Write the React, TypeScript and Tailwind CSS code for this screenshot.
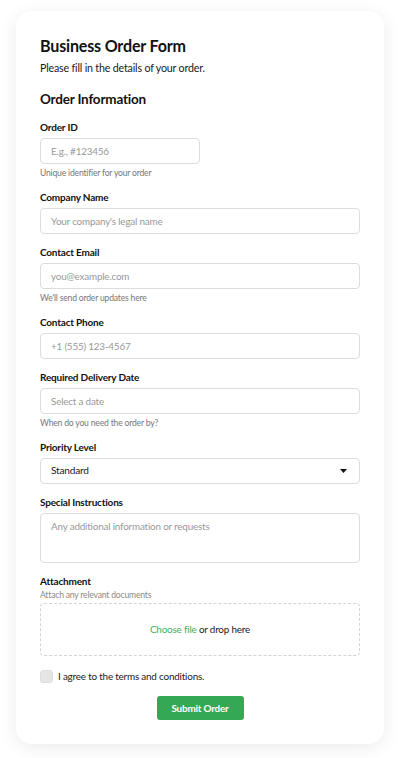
import React from "react";

function Label({ children, className = "" }: { children: React.ReactNode; className?: string }) {
  return <div className={`text-[10px] leading-[18px] font-bold text-[#111] mb-[2px] ${className}`}>{children}</div>;
}

function Helper({ children, className = "" }: { children: React.ReactNode; className?: string }) {
  return <div className={`text-[8.6px] leading-[12px] text-[#777] mt-[3px] ${className}`}>{children}</div>;
}

function Input({ placeholder, className = "" }: { placeholder: string; className?: string }) {
  return (
    <div className={`h-[26px] border border-[#dcdcdc] rounded-[4px] px-[10px] flex items-center text-[9.9px] text-[#999] ${className}`}>
      {placeholder}
    </div>
  );
}

export default function App() {
  return (
    <div className="bg-white min-h-[758px] pt-[11px] px-4 pb-3 tracking-[-0.012em]" style={{ fontFamily: '"Lato", "Noto Sans", sans-serif' }}>
      <div className="bg-white rounded-[16px] shadow-[0_4px_18px_rgba(0,0,0,0.08)] px-6 pt-6 pb-6 text-[#111]">
        <h1 className="text-[16.1px] leading-[22px] font-bold">Business Order Form</h1>
        <p className="text-[10.7px] leading-[20px] mt-px text-[#1a1a1a]">Please fill in the details of your order.</p>
        <h2 className="text-[13.5px] leading-[22px] font-bold mt-[10px] mb-[8px]">Order Information</h2>

        <div className="mb-[9px]">
          <Label>Order ID</Label>
          <Input placeholder="E.g., #123456" className="w-[160px]" />
          <Helper>Unique identifier for your order</Helper>
        </div>

        <div className="mb-[9px]">
          <Label>Company Name</Label>
          <Input placeholder="Your company's legal name" />
        </div>

        <div className="mb-[9px]">
          <Label>Contact Email</Label>
          <Input placeholder="you@example.com" />
          <Helper>We'll send order updates here</Helper>
        </div>

        <div className="mb-[9px]">
          <Label>Contact Phone</Label>
          <Input placeholder="+1 (555) 123-4567" />
        </div>

        <div className="mb-[9px]">
          <Label>Required Delivery Date</Label>
          <Input placeholder="Select a date" />
          <Helper>When do you need the order by?</Helper>
        </div>

        <div className="mb-[9px]">
          <Label>Priority Level</Label>
          <div className="h-[26px] border border-[#dcdcdc] rounded-[4px] px-[10px] flex items-center justify-between text-[10.1px] text-[#1a1a1a]">
            <span>Standard</span>
            <svg width="7" height="4" viewBox="0 0 7 4" className="mr-[2px]">
              <path d="M0 0h7L3.5 4z" fill="#111" />
            </svg>
          </div>
        </div>

        <div className="mb-[9px]">
          <Label>Special Instructions</Label>
          <div className="h-[50px] border border-[#dcdcdc] rounded-[4px] px-[10px] pt-[4px] text-[9.9px] leading-[16px] text-[#999]">
            Any additional information or requests
          </div>
        </div>

        <div>
          <Label className="mb-0">Attachment</Label>
          <div className="text-[8.6px] leading-[10px] text-[#8a8a8a] -mt-[2px]">Attach any relevant documents</div>
          <div className="mt-[3px] h-[53px] border border-dashed border-[#d4d4d4] rounded-[4px] flex items-center justify-center text-[9.9px]">
            <span className="text-[#3fae5a]">Choose file</span>
            <span className="text-[#1a1a1a]">&nbsp;or drop here</span>
          </div>
        </div>

        <div className="mt-[10px] h-[20px] flex items-center gap-[5px]">
          <div className="w-[13px] h-[13px] rounded-[3px] bg-[#e6e6e6] border border-[#dedede]" />
          <span className="text-[9.9px] text-[#1a1a1a]">I agree to the terms and conditions.</span>
        </div>

        <div className="mt-[10px] flex justify-center">
          <div className="h-[24px] w-[87px] rounded-[3px] bg-[#34a853] text-white text-[9.9px] font-bold flex items-center justify-center">
            Submit Order
          </div>
        </div>
      </div>
    </div>
  );
}
